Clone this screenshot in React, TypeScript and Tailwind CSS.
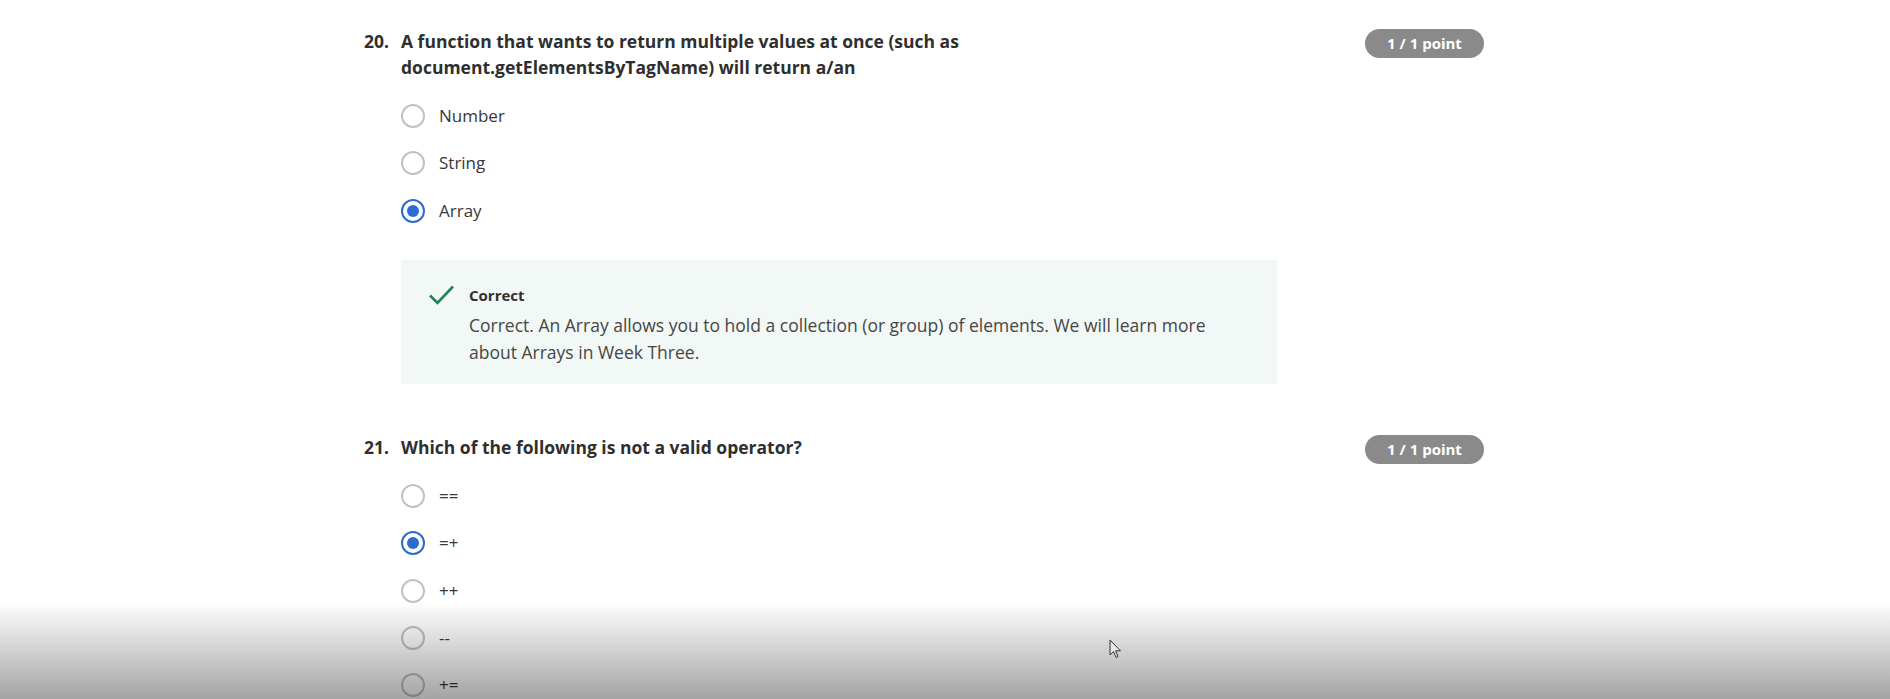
import React from "react";

function Radio({ checked }: { checked?: boolean }) {
  return checked ? (
    <span className="flex h-[24px] w-[24px] shrink-0 items-center justify-center rounded-full border-[2.5px] border-[#2a6dd0]">
      <span className="h-[12px] w-[12px] rounded-full bg-[#2a6dd0]" />
    </span>
  ) : (
    <span className="h-[24px] w-[24px] shrink-0 rounded-full border-[2px] border-[#c2c2c2]" />
  );
}

function Option({ label, checked }: { label: string; checked?: boolean }) {
  return (
    <div className="flex h-[47.3px] items-center gap-[14px]">
      <Radio checked={checked} />
      <span className="text-[17px] leading-[24px] text-[#383838]">{label}</span>
    </div>
  );
}

function Badge() {
  return (
    <div className="mt-[1px] flex h-[29px] w-[119px] shrink-0 items-center justify-center rounded-full bg-[#8a8a8a] text-[15px] font-bold text-white">
      1 / 1 point
    </div>
  );
}

function Question({
  num,
  title,
  children,
}: {
  num: string;
  title: React.ReactNode;
  children: React.ReactNode;
}) {
  return (
    <div className="flex w-[1120px] items-start">
      <div className="w-[37px] shrink-0 text-[17.5px] font-bold leading-[26px] text-[#2f2f2f]">{num}</div>
      <div className="flex-1">
        <div className="text-[17.5px] font-bold leading-[26px] text-[#2f2f2f]">{title}</div>
        <div className="mt-[12.5px]">{children}</div>
      </div>
      <Badge />
    </div>
  );
}

export default function App() {
  return (
    <div className="relative h-[699px] w-full overflow-hidden bg-white font-['Open_Sans',sans-serif]">
      <div className="pl-[364px] pt-[28px]">
        <Question
          num="20."
          title={
            <>
              A function that wants to return multiple values at once (such as
              <br />
              document.getElementsByTagName) will return a/an
            </>
          }
        >
          <Option label="Number" />
          <Option label="String" />
          <Option label="Array" checked />
          <div className="mt-[26px] w-[876px] bg-[#f2f8f5] pb-[18.5px] pl-[27px] pr-[24px] pt-[25px]">
            <div className="flex items-start gap-[14px]">
              <svg width="27" height="22" viewBox="0 0 27 22" className="mt-[-1px] shrink-0">
                <path d="M2 11.5 L9.5 19 L25 2.5" fill="none" stroke="#1f8456" strokeWidth="2.6" />
              </svg>
              <div>
                <div className="text-[15px] font-bold leading-[20px] text-[#2f2f2f]">Correct</div>
                <div className="mt-[7px] text-[17.5px] leading-[26.5px] text-[#464646]">
                  Correct. An Array allows you to hold a collection (or group) of elements. We will learn more
                  <br />
                  about Arrays in Week Three.
                </div>
              </div>
            </div>
          </div>
        </Question>
        <div className="mt-[50px]">
          <Question num="21." title="Which of the following is not a valid operator?">
            <Option label="==" />
            <Option label="=+" checked />
            <Option label="++" />
            <Option label="--" />
            <Option label="+=" />
          </Question>
        </div>
      </div>
      <div className="pointer-events-none absolute bottom-0 left-0 h-[97px] w-full bg-gradient-to-b from-transparent to-black/[0.36]" />
      <svg
        className="absolute left-[1109px] top-[639px]"
        width="13"
        height="21"
        viewBox="0 0 13 21"
      >
        <path
          d="M1 1 L1 16 L4.5 12.5 L7 18.5 L9 17.6 L6.6 11.8 L11.5 11.8 Z"
          fill="#e8e8e8"
          stroke="#333"
          strokeWidth="1"
          strokeLinejoin="round"
        />
      </svg>
    </div>
  );
}
